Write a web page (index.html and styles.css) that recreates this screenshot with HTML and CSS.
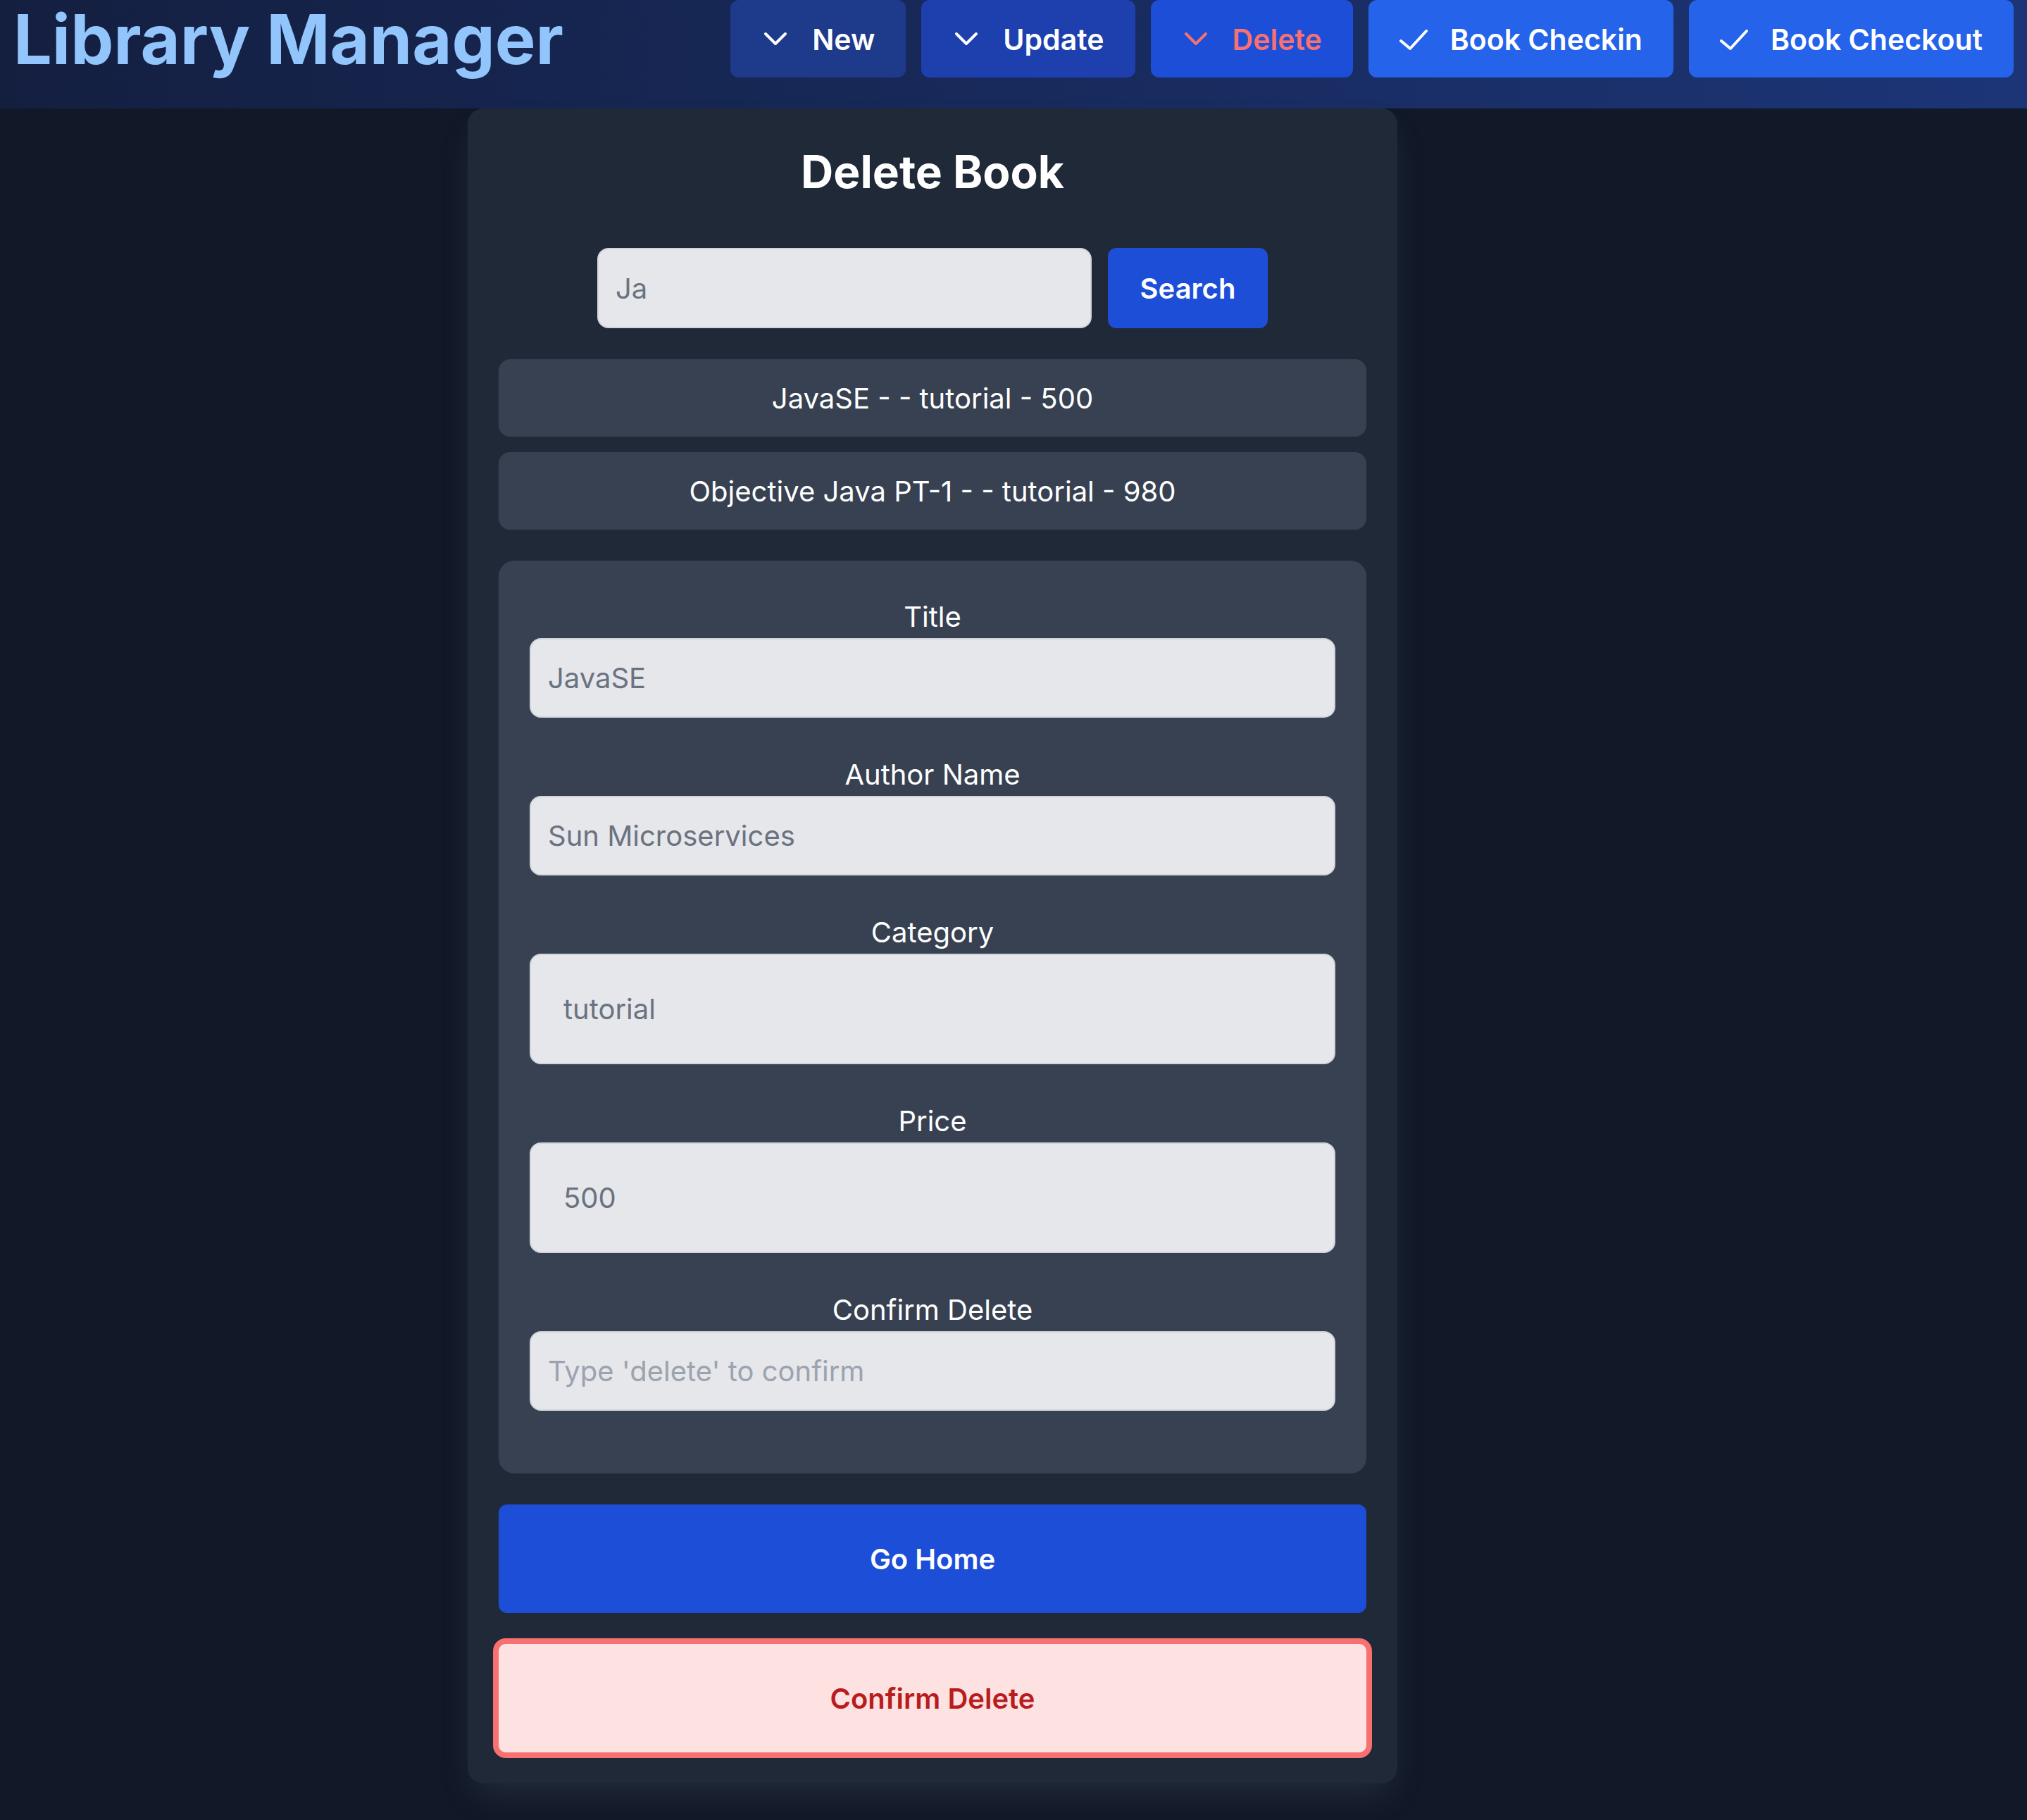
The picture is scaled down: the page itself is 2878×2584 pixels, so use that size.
FILE: index.html
```html
<!DOCTYPE html>
<html lang="en">
<head>
<meta charset="utf-8">
<title>Library Manager</title>
<link rel="stylesheet" href="styles.css">
</head>
<body>
<header class="topbar">
  <h1 class="brand">Library Manager</h1>
  <nav class="nav">
    <button class="nav-btn nav-new">
      <svg class="ico" viewBox="0 0 40 40"><polyline points="6,12 20,26 34,12"/></svg>
      <span>New</span>
    </button>
    <button class="nav-btn nav-update">
      <svg class="ico" viewBox="0 0 40 40"><polyline points="6,12 20,26 34,12"/></svg>
      <span>Update</span>
    </button>
    <button class="nav-btn nav-delete">
      <svg class="ico" viewBox="0 0 40 40"><polyline points="6,12 20,26 34,12"/></svg>
      <span>Delete</span>
    </button>
    <button class="nav-btn nav-check">
      <svg class="ico" viewBox="0 0 40 40"><polyline points="2,22 15,33 38,8"/></svg>
      <span>Book Checkin</span>
    </button>
    <button class="nav-btn nav-check">
      <svg class="ico" viewBox="0 0 40 40"><polyline points="2,22 15,33 38,8"/></svg>
      <span>Book Checkout</span>
    </button>
  </nav>
</header>
<main class="page">
  <section class="card">
    <h2 class="card-title">Delete Book</h2>
    <div class="search-row">
      <input class="search-input" type="text" value="Ja">
      <button class="search-btn">Search</button>
    </div>
    <ul class="results">
      <li class="result">JavaSE - - tutorial - 500</li>
      <li class="result">Objective Java PT-1 - - tutorial - 980</li>
    </ul>
    <form class="form-box">
      <div class="field">
        <label class="label">Title</label>
        <input class="input" type="text" value="JavaSE">
      </div>
      <div class="field">
        <label class="label">Author Name</label>
        <input class="input" type="text" value="Sun Microservices">
      </div>
      <div class="field">
        <label class="label">Category</label>
        <input class="input input-tall" type="text" value="tutorial">
      </div>
      <div class="field">
        <label class="label">Price</label>
        <input class="input input-tall" type="text" value="500">
      </div>
      <div class="field">
        <label class="label">Confirm Delete</label>
        <input class="input" type="text" placeholder="Type 'delete' to confirm">
      </div>
    </form>
    <button class="btn-home">Go Home</button>
    <button class="btn-confirm">Confirm Delete</button>
  </section>
</main>
</body>
</html>
```
FILE: styles.css
```css
* { box-sizing: border-box; }

html, body {
  margin: 0;
  padding: 0;
}

body {
  background: #111827;
  font-family: Inter, "Noto Sans", "Liberation Sans", sans-serif;
  color: #ffffff;
  min-height: 2584px;
}

.topbar {
  height: 154px;
  display: flex;
  align-items: flex-start;
  justify-content: space-between;
  padding: 0 19px 0 19px;
  background: linear-gradient(to right, #141f40, #1c3577);
}

.brand {
  margin: 8px 0 0 0;
  font-size: 97px;
  line-height: 96px;
  font-weight: 700;
  color: #93c5fd;
  letter-spacing: 0;
}

.nav {
  display: flex;
  gap: 22px;
}

.nav-btn {
  display: flex;
  align-items: center;
  gap: 32px;
  height: 110px;
  padding: 2px 44px 0 44px;
  border: none;
  border-radius: 12px;
  font-family: inherit;
  font-size: 41px;
  font-weight: 600;
  line-height: 60px;
  color: #ffffff;
}

.ico {
  width: 40px;
  height: 40px;
  fill: none;
  stroke: currentColor;
  stroke-width: 4;
  stroke-linecap: round;
  stroke-linejoin: round;
}

.nav-new { background: #1e3a8a; }
.nav-update { background: #1e40af; }
.nav-delete { background: #1d4ed8; color: #f87171; }
.nav-check { background: #2563eb; }

.page {
  display: flex;
  padding-left: 664px;
}

.card {
  width: 1320px;
  display: flex;
  flex-direction: column;
  padding: 0 44px 44px;
  background: #1f2937;
  border-radius: 22px;
  box-shadow: 0 24px 48px -10px rgba(100, 116, 139, 0.22);
}

.card-title {
  margin: 50px 0 68px;
  text-align: center;
  font-size: 64px;
  line-height: 80px;
  font-weight: 700;
}

.search-row {
  display: flex;
  justify-content: center;
  gap: 23px;
}

.search-input {
  width: 702px;
  height: 114px;
  padding: 0 24px;
  background: #e5e7eb;
  border: 2px solid #d1d5db;
  border-radius: 16px;
  font-family: inherit;
  font-size: 40px;
  color: #6b7280;
  outline: none;
}

.search-btn {
  width: 227px;
  height: 114px;
  border: none;
  border-radius: 12px;
  background: #1d4ed8;
  color: #ffffff;
  font-family: inherit;
  font-size: 40px;
  font-weight: 600;
}

.results {
  list-style: none;
  margin: 44px 0 0;
  padding: 0;
  display: flex;
  flex-direction: column;
  gap: 22px;
}

.result {
  height: 110px;
  display: flex;
  align-items: center;
  justify-content: center;
  background: #374151;
  border-radius: 16px;
  font-size: 40px;
  color: #ffffff;
}

.form-box {
  margin: 44px 0 0;
  padding: 50px 44px 89px;
  background: #374151;
  border-radius: 22px;
  display: flex;
  flex-direction: column;
  gap: 51px;
}

.field {
  display: flex;
  flex-direction: column;
}

.label {
  display: block;
  text-align: center;
  font-size: 40px;
  line-height: 60px;
  color: #ffffff;
}

.input {
  width: 100%;
  height: 113px;
  padding: 0 24px;
  background: #e5e7eb;
  border: 2px solid #d1d5db;
  border-radius: 16px;
  font-family: inherit;
  font-size: 40px;
  color: #6b7280;
  outline: none;
}

.input::placeholder { color: #9ca3af; }

.input-tall {
  height: 157px;
  padding: 0 46px;
}

.btn-home {
  margin-top: 44px;
  height: 154px;
  border: none;
  border-radius: 12px;
  background: #1d4ed8;
  color: #ffffff;
  font-family: inherit;
  font-size: 40px;
  font-weight: 600;
}

.btn-confirm {
  margin-top: 44px;
  height: 154px;
  border: none;
  border-radius: 10px;
  background: #fee2e2;
  color: #b91c1c;
  font-family: inherit;
  font-size: 40px;
  font-weight: 600;
  box-shadow: 0 0 0 8px #f87171;
}
```
